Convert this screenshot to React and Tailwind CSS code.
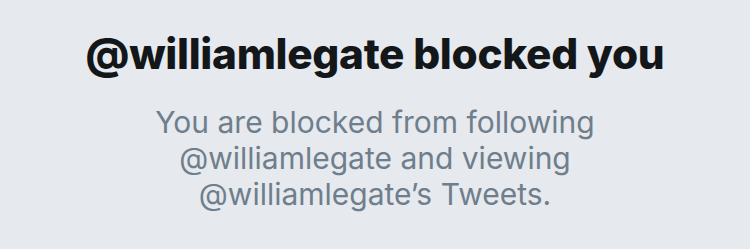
export default function App() {
  return (
    <div className="w-[750px] h-[249px] bg-[#e6e9ed] flex flex-col items-center overflow-hidden" style={{ fontFamily: "Inter, 'Noto Sans', sans-serif" }}>
      <h1 className="mt-[29px] text-[42.3px] leading-[50px] font-extrabold text-[#14171a] tracking-[-0.3px] whitespace-nowrap">@williamlegate blocked you</h1>
      <p className="mt-[25px] w-[480px] text-center text-[30px] leading-[36px] text-[#6f7e8c]">
        You are blocked from following @williamlegate and viewing @williamlegate’s Tweets.
      </p>
    </div>
  );
}
